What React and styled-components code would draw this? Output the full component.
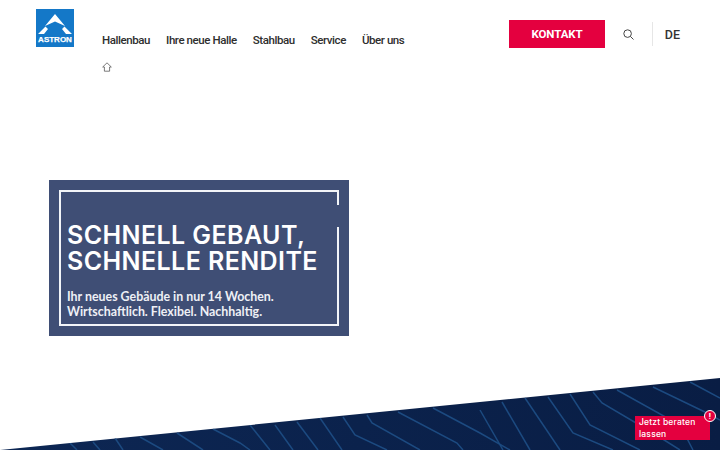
import React from "react";
import styled, { createGlobalStyle } from "styled-components";

const GlobalStyle = createGlobalStyle`
    html, body {
        margin: 0;
        padding: 0;
        background: #fff;
    }
    * {
        box-sizing: border-box;
    }
`

const Page = styled.div`
    position: relative;
    width: 720px;
    height: 450px;
    overflow: hidden;
    font-family: "Roboto", "Liberation Sans", sans-serif;
    color: #2b2b2b;
`
const Header = styled.header`
    display: flex;
    align-items: flex-start;
    padding: 9px 40px 0 36px;
`
const Logo = styled.a`
    display: block;
    width: 38px;
    height: 38px;
    margin-right: 28px;
    flex: none;
`
const NavColumn = styled.div`
    display: flex;
    flex-direction: column;
    padding-top: 25px;
`
const Nav = styled.nav`
    display: flex;
    gap: 16px;
`
const NavItem = styled.a`
    font-size: 11.5px;
    line-height: 13px;
    font-weight: 500;
    letter-spacing: -0.42px;
    color: #2e2e2e;
    white-space: nowrap;
`
const Breadcrumb = styled.div`
    display: flex;
    height: 10px;
    margin-top: 15px;
    color: #444;
`
const Actions = styled.div`
    display: flex;
    align-items: center;
    margin-left: auto;
    padding-top: 11px;
`
const ContactButton = styled.a`
    display: flex;
    align-items: center;
    justify-content: center;
    width: 96px;
    height: 28px;
    background: #e4003f;
    color: #fff;
    font-size: 11.5px;
    font-weight: 700;
    letter-spacing: -0.1px;
`
const SearchButton = styled.span`
    display: flex;
    width: 11px;
    height: 11px;
    margin: 0 18px;
    color: #444;
`
const Language = styled.span`
    display: flex;
    align-items: center;
    justify-content: flex-end;
    width: 28px;
    height: 24px;
    border-left: 1px solid #e6e6e6;
    font-size: 12.5px;
    font-weight: 500;
    color: #333;
`
const Hero = styled.section`
    width: 300px;
    height: 156px;
    margin: 108px 0 0 49px;
    padding: 10px;
    background: #3f4e75;
`
const HeroFrame = styled.div`
    position: relative;
    height: 100%;
    padding: 30px 0 0 6px;
    border: 2px solid #f2f4f8;
`
const FrameGap = styled.span`
    position: absolute;
    top: 13px;
    right: -2px;
    width: 2px;
    height: 22px;
    background: #3f4e75;
`
const HeroTitle = styled.h1`
    margin: 0;
    font-family: "Inter", "Liberation Sans", sans-serif;
    font-size: 25px;
    line-height: 26px;
    font-weight: 600;
    letter-spacing: 0.42px;
    color: #fff;
    white-space: nowrap;
`
const HeroText = styled.p`
    margin: 15px 0 0;
    font-family: "Lato", "Liberation Sans", sans-serif;
    font-size: 12.4px;
    line-height: 15px;
    font-weight: 700;
    color: #eef0f5;
    white-space: nowrap;
`
const Band = styled.svg`
    position: absolute;
    left: 0;
    bottom: 0;
    display: block;
`
const ChatButton = styled.a`
    position: absolute;
    left: 635px;
    top: 416px;
    width: 75px;
    height: 24px;
    padding: 1px 4px;
    background: #e4003f;
    color: #fff;
    font-family: "Inter", "Liberation Sans", sans-serif;
    font-size: 8.5px;
    line-height: 11.5px;
    font-weight: 500;
    letter-spacing: 0.2px;
`
const ChatBadge = styled.span`
    position: absolute;
    top: -6px;
    right: -6px;
    display: flex;
    align-items: center;
    justify-content: center;
    width: 12px;
    height: 12px;
    border: 1.5px solid #fff;
    border-radius: 50%;
    background: #e4003f;
    color: #fff;
    font-size: 8px;
    line-height: 1;
    font-weight: 700;
`

const navItems = ["Hallenbau", "Ihre neue Halle", "Stahlbau", "Service", "Über uns"]

const bandLines = [
    "70,443 77,450", "93,442 100,450", "115,438 123,450", "140,437 163,450",
    "177,433 203,450", "213,429 240,443 250,450", "250,425 270,450", "275,425 293,450",
    "297,422 318,450", "320,418 342,450", "343,417 355,435 387,450", "367,415 372,423 420,450",
    "398,412 457,443 463,450", "433,408 480,433 510,450", "480,410 503,450", "502,402 530,450",
    "525,398 560,450", "548,397 573,433 613,450", "570,394 590,425 640,450",
    "593,392 602,403 653,433 680,450", "617,390 680,425 693,450", "653,387 707,413 720,420",
    "690,382 720,398",
]

const LogoMark = () => (
    <svg width="38" height="38" viewBox="0 0 38 38">
        <rect width="38" height="38" fill="#1478c8"/>
        <path d="M19 5 L29 17 L19 12.5 L9 17 Z" fill="#fff"/>
        <path d="M9.5 17.5 L12 20 L8 25 H2 Z M28.5 17.5 L26 20 L30 25 H36 Z" fill="#fff"/>
        <text x="19" y="33.2" textAnchor="middle" fontFamily="Liberation Sans, sans-serif" fontSize="8" fontWeight="700" stroke="#fff" strokeWidth="0.25" fill="#fff">ASTRON</text>
    </svg>
)

const App = () => {
    return (
        <Page>
            <GlobalStyle/>
            <Header>
                <Logo><LogoMark/></Logo>
                <NavColumn>
                    <Nav>
                        {navItems.map(item => <NavItem key={item}>{item}</NavItem>)}
                    </Nav>
                    <Breadcrumb>
                        <svg width="10" height="10" viewBox="0 0 10 10" fill="none" stroke="currentColor" strokeWidth="0.7">
                            <path d="M0.7 5 L5 0.8 L9.3 5 H7.6 V9.2 H2.4 V5 Z"/>
                        </svg>
                    </Breadcrumb>
                </NavColumn>
                <Actions>
                    <ContactButton>KONTAKT</ContactButton>
                    <SearchButton>
                        <svg width="11" height="11" viewBox="0 0 11 11" fill="none" stroke="currentColor" strokeWidth="1">
                            <circle cx="4.6" cy="4.6" r="3.8"/>
                            <path d="M7.4 7.4 L10.5 10.5"/>
                        </svg>
                    </SearchButton>
                    <Language>DE</Language>
                </Actions>
            </Header>
            <Hero>
                <HeroFrame>
                    <FrameGap/>
                    <HeroTitle>SCHNELL GEBAUT,<br/>SCHNELLE RENDITE</HeroTitle>
                    <HeroText>Ihr neues Gebäude in nur 14 Wochen.<br/>Wirtschaftlich. Flexibel. Nachhaltig.</HeroText>
                </HeroFrame>
            </Hero>
            <Band width="720" height="72" viewBox="0 378 720 72">
                <defs>
                    <clipPath id="band-clip">
                        <polygon points="0,450 720,378 720,450"/>
                    </clipPath>
                    <linearGradient id="band-fill" x1="0" y1="0" x2="1" y2="0">
                        <stop offset="0" stopColor="#0d2754"/>
                        <stop offset="1" stopColor="#091d44"/>
                    </linearGradient>
                </defs>
                <g clipPath="url(#band-clip)">
                    <rect x="0" y="378" width="720" height="72" fill="url(#band-fill)"/>
                    {bandLines.map(points => (
                        <polyline key={points} points={points} fill="none" stroke="#1c4a80" strokeWidth="1.5"/>
                    ))}
                </g>
            </Band>
            <ChatButton>
                Jetzt beraten lassen
                <ChatBadge>!</ChatBadge>
            </ChatButton>
        </Page>
    )
};

export default App
